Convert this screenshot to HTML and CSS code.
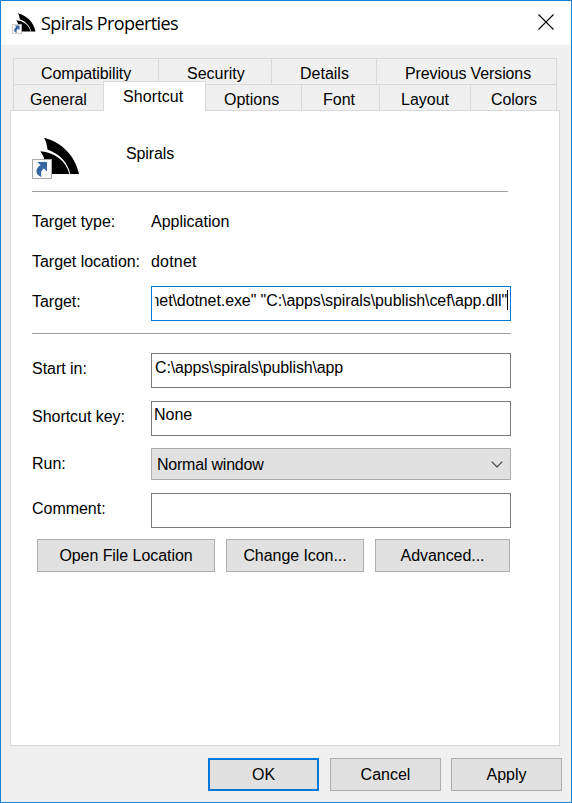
FILE: index.html
```html
<!DOCTYPE html>
<html lang="en">
<head>
<meta charset="utf-8">
<title>Spirals Properties</title>
<link rel="stylesheet" href="styles.css">
</head>
<body>
<svg width="0" height="0" class="defs" aria-hidden="true">
  <symbol id="app-icon" viewBox="0 0 48 44">
    <path d="M12 .7C29 5 43 18 47 37H38.300C36 26 28 17 15.500 12.500C15 8 14 4 12 .7Z" fill="#000"/>
    <path d="M8.300 14.300C23 15.500 34 24 37.300 37H12V21C11 18.500 10 16.500 8.300 14.300Z" fill="#000"/>
    <rect x=".5" y="22.500" width="19" height="19" fill="#fafafa" stroke="#aaa"/>
    <path d="M5.500 25H15V34.500L12 31.500C9 33.500 8.500 36 9.500 40C3.500 38 2.500 32 8.500 28Z" fill="#3565a3"/>
  </symbol>
</svg>
<main class="window">
  <header class="titlebar">
    <svg class="title-icon"><use href="#app-icon"/></svg>
    <h1 class="title">Spirals Properties</h1>
    <svg class="close" viewBox="0 0 16 16"><path d="M.5.5l15 15M15.500.5l-15 15" fill="none" stroke="#000" stroke-width="1.100"/></svg>
  </header>
  <nav class="tabs">
    <div class="tab-row upper">
      <span class="tab compat">Compatibility</span><span class="tab security">Security</span><span class="tab details">Details</span><span class="tab versions">Previous Versions</span>
    </div>
    <div class="tab-row lower">
      <span class="tab general">General</span><span class="tab shortcut">Shortcut</span><span class="tab options">Options</span><span class="tab font">Font</span><span class="tab layout">Layout</span><span class="tab colors">Colors</span>
    </div>
  </nav>
  <section class="panel">
    <div class="identity">
      <svg class="big-icon"><use href="#app-icon"/></svg>
      <span class="name">Spirals</span>
    </div>
    <div class="rule first"></div>
    <div class="row info"><span>Target type:</span><span>Application</span></div>
    <div class="row info"><span>Target location:</span><span class="dotnet">dotnet</span></div>
    <div class="row target"><span>Target:</span><div class="field focus"><div class="clip"><span class="path">net\dotnet.exe" "C:\apps\spirals\publish\cef\app.dll"</span></div><i class="caret"></i></div></div>
    <div class="rule second"></div>
    <div class="row start"><span>Start in:</span><div class="field folder">C:\apps\spirals\publish\app</div></div>
    <div class="row key"><span>Shortcut key:</span><div class="field none">None</div></div>
    <div class="row run"><span>Run:</span><div class="select"><span>Normal window</span><svg class="chevron" viewBox="0 0 12 7"><path d="M.7.7L6 6L11.300.7" fill="none" stroke="#444" stroke-width="1.200"/></svg></div></div>
    <div class="row comment"><span>Comment:</span><div class="field"></div></div>
    <div class="actions"><button class="open">Open File Location</button><button class="change">Change Icon...</button><button class="advanced">Advanced...</button></div>
  </section>
  <footer class="footer"><button class="ok">OK</button><button class="cancel">Cancel</button><button>Apply</button></footer>
</main>
</body>
</html>
```

FILE: styles.css
```css
* { box-sizing: border-box; }
body { margin: 0; font: 16px/20px "Liberation Sans", Arial, sans-serif; color: #000; }
.defs { display: block; }
.window { width: 572px; height: 803px; border: 1px solid #1883d7; background: #f0f0f0; overflow: hidden; }
.titlebar { height: 44px; background: #fff; display: flex; align-items: flex-start; padding-left: 11px; }
.title-icon { width: 24px; height: 22px; margin-top: 12px; flex: none; }
.title { margin: 9px 0 0 5px; font: 18px/26px "Open Sans", "Noto Sans", sans-serif; width: 482px; flex: none; white-space: nowrap; letter-spacing: -.6px; }
.close { width: 16px; height: 16px; margin: 13px 0 0 15px; flex: none; }
.tabs { margin: 13px 0 0 12px; width: 544px; }
.tab-row { display: flex; height: 26px; }
.tab { border-top: 1px solid #d9d9d9; border-left: 1px solid #d9d9d9; height: 26px; padding-top: 5px; white-space: nowrap; }
.tab:last-child { border-right: 1px solid #d9d9d9; }
.compat { width: 145px; padding-left: 27px; letter-spacing: -.12px; }
.security { width: 113px; padding-left: 28px; }
.details { width: 105px; padding-left: 28px; }
.versions { width: 181px; padding-left: 28px; letter-spacing: -.12px; }
.general { width: 90px; padding-left: 16px; }
.shortcut { width: 103px; height: 30px; margin-top: -3px; padding-left: 19px; background: #fff; border-right: 1px solid #d9d9d9; position: relative; z-index: 1; letter-spacing: .1px; }
.options { width: 95px; padding-left: 18px; border-left: 0; }
.font { width: 78px; padding-left: 21px; }
.layout { width: 91px; padding-left: 21px; }
.colors { width: 87px; padding-left: 20px; letter-spacing: -.05px; }
.panel { margin-left: 9px; width: 550px; height: 636px; border: 1px solid #d9d9d9; background: #fff; padding-left: 21px; }
.identity { display: flex; height: 80px; }
.big-icon { width: 48px; height: 44px; margin-top: 26px; }
.name { margin: 33px 0 0 46px; letter-spacing: -.1px; }
.rule { height: 1px; background: #a0a0a0; }
.first { width: 476px; margin-bottom: 19px; }
.second { width: 479px; margin: 12px 0 19px; }
.row { display: grid; grid-template-columns: 119px 360px; white-space: nowrap; }
.info { height: 40px; padding-top: 1px; }
.dotnet { letter-spacing: .2px; }
.target { height: 35px; margin-top: -5px; }
.row > span:first-child { letter-spacing: -.03px; }
.target > span, .start > span, .key > span, .run > span, .comment > span { padding-top: 6px; }
.field { height: 35px; border: 1px solid #7a7a7a; padding: 4px 3px; }
.folder { letter-spacing: -.15px; }
.field.none { padding: 3px 2px; }
.focus { border-color: #0078d7; display: flex; padding: 3px 0 0 3px; }
.clip { width: 352px; height: 24px; padding-top: 1px; overflow: hidden; display: flex; justify-content: flex-end; }
.path { flex: none; letter-spacing: -.09px; }
.caret { width: 1px; height: 20px; background: #000; }
.start { height: 35px; margin-bottom: 13px; }
.key { height: 35px; margin-bottom: 12px; }
.run { height: 32px; margin-bottom: 13px; }
.select { display: flex; justify-content: space-between; border: 1px solid #adadad; background: #e1e1e1; padding: 6px 7px 0 5px; letter-spacing: -.22px; }
.chevron { width: 12px; height: 7px; margin-top: 6px; }
.comment { height: 35px; }
.actions { display: flex; margin: 11px 0 0 5px; letter-spacing: -.06px; }
button { font: inherit; letter-spacing: inherit; color: inherit; height: 33px; border: 1px solid #adadad; background: #e1e1e1; padding: 0; white-space: nowrap; }
.open { width: 178px; margin-right: 11px; }
.change { width: 138px; margin-right: 11px; }
.advanced { width: 135px; }
.footer { display: flex; margin: 12px 0 0 207px; }
.footer button { width: 111px; }
.footer .ok { border: 2px solid #0078d7; margin-right: 11px; }
.footer .cancel { margin-right: 10px; }
```
